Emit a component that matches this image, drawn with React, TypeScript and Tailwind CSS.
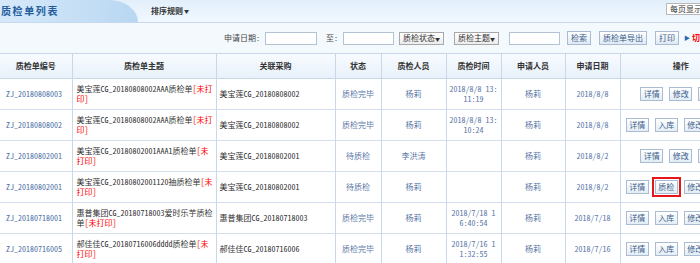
type Row = {
  code: string;
  title: string;
  first: string; // first line of title + [未打印]
  purchase: string;
  status: string;
  inspector: string;
  time: [string, string] | null;
  applicant: string;
  date: string;
  actions: string[];
  mark?: string;
};

const rows: Row[] = [
  {
    code: "ZJ_20180808003",
    title: "美宝莲CG_20180808002AAA质检单",
    first: "美宝莲CG_20180808002AAA质检单[未打",
    purchase: "美宝莲CG_20180808002",
    status: "质检完毕",
    inspector: "杨莉",
    time: ["2018/8/8 13:", "11:19"],
    applicant: "杨莉",
    date: "2018/8/8",
    actions: ["详情", "修改", "删除"],
  },
  {
    code: "ZJ_20180808002",
    title: "美宝莲CG_20180808002AAA质检单",
    first: "美宝莲CG_20180808002AAA质检单[未打",
    purchase: "美宝莲CG_20180808002",
    status: "质检完毕",
    inspector: "杨莉",
    time: ["2018/8/8 13:", "10:24"],
    applicant: "杨莉",
    date: "2018/8/8",
    actions: ["详情", "入库", "修改", "删除"],
  },
  {
    code: "ZJ_20180802001",
    title: "美宝莲CG_20180802001AAA1质检单",
    first: "美宝莲CG_20180802001AAA1质检单[未",
    purchase: "美宝莲CG_20180802001",
    status: "待质检",
    inspector: "李洪涛",
    time: null,
    applicant: "杨莉",
    date: "2018/8/2",
    actions: ["详情", "修改", "删除"],
  },
  {
    code: "ZJ_20180802001",
    title: "美宝莲CG_20180802001120抽质检单",
    first: "美宝莲CG_20180802001120抽质检单[未",
    purchase: "美宝莲CG_20180802001",
    status: "待质检",
    inspector: "杨莉",
    time: null,
    applicant: "杨莉",
    date: "2018/8/2",
    actions: ["详情", "质检", "修改", "删除"],
    mark: "质检",
  },
  {
    code: "ZJ_20180718001",
    title: "惠普集团CG_20180718003爱时乐芋质检单",
    first: "惠普集团CG_20180718003爱时乐芋质检",
    purchase: "惠普集团CG_20180718003",
    status: "质检完毕",
    inspector: "杨莉",
    time: ["2018/7/18 1", "6:40:54"],
    applicant: "杨莉",
    date: "2018/7/18",
    actions: ["详情", "入库", "修改", "删除"],
  },
  {
    code: "ZJ_20180716005",
    title: "郝佳佳CG_20180716006dddd质检单",
    first: "郝佳佳CG_20180716006dddd质检单[未",
    purchase: "郝佳佳CG_20180716006",
    status: "质检完毕",
    inspector: "杨莉",
    time: ["2018/7/16 1", "1:32:55"],
    applicant: "杨莉",
    date: "2018/7/16",
    actions: ["详情", "入库", "修改", "删除"],
  },
];

const headers = [
  "质检单编号",
  "质检单主题",
  "关联采购",
  "状态",
  "质检人员",
  "质检时间",
  "申请人员",
  "申请日期",
  "操作",
];

const widths = [72, 144, 119, 46, 65, 55, 64, 55, 121];

function Subject({ title, first }: { title: string; first: string }) {
  const full = title + "[未打印]";
  const lines = [first, full.slice(first.length)];
  let offset = 0;
  return (
    <>
      {lines.map((line, i) => {
        const start = offset;
        offset += line.length;
        const black = Math.max(0, Math.min(line.length, title.length - start));
        return (
          <div key={i} className="whitespace-nowrap">
            {line.slice(0, black)}
            <span className="text-[#ff0000]">{line.slice(black)}</span>
          </div>
        );
      })}
    </>
  );
}

function SmallButton({ label }: { label: string }) {
  return (
    <span className="flex h-[14px] w-[23px] items-center justify-center border border-[#a9bcd2] bg-gradient-to-b from-white to-[#e4edf6] text-[8px] leading-none text-[#3b5d8a]">
      {label}
    </span>
  );
}

function ToolButton({ label }: { label: string }) {
  return (
    <span className="flex h-[14px] items-center justify-center border border-[#a9bcd2] bg-gradient-to-b from-white to-[#dfe9f4] px-[3px] text-[8px] leading-none text-[#3b5d8a]">
      {label}
    </span>
  );
}

function TextInput({ width }: { width: string }) {
  return <span className={`block h-[13px] border border-[#b3c3d4] bg-white ${width}`} />;
}

function Select({ label }: { label: string }) {
  return (
    <span className="flex h-[13px] w-[45px] items-center justify-between border border-[#a8a8a8] bg-gradient-to-b from-white to-[#ececec] px-[3px] text-[8px] leading-none text-[#333]">
      <span>{label}</span>
      <span className="text-[5px]">▼</span>
    </span>
  );
}

export default function App() {
  return (
    <div className="h-[263px] w-[700px] overflow-hidden bg-white font-['Noto_Sans_Mono_CJK_SC','Noto_Sans_CJK_SC',sans-serif] text-[8px] leading-[10px] text-[#333]">
      {/* title bar */}
      <div className="flex h-[23px] items-stretch border-b border-[#c6d9ec] bg-gradient-to-b from-[#e2effb] to-[#f1f8fe]">
        <div className="flex w-[138px] items-center rounded-tr-[30px_23px] bg-gradient-to-r from-[#d6e9fa] to-[#b9d7f2] pl-[1px]">
          <span className="text-[10px] font-bold tracking-[1.6px] text-[#245d9c]">质检单列表</span>
        </div>
        <div className="ml-[13px] flex items-center gap-[1px] font-bold text-[#333]">
          <span>排序规则</span>
          <span className="text-[5px]">▼</span>
        </div>
        <div className="ml-auto mr-[-24px] mt-[3px] h-[12px] w-[58px] overflow-hidden border border-[#b8b8b8] bg-white px-[3px] text-[8px] leading-[10px] whitespace-nowrap">
          每页显示10条
        </div>
      </div>

      {/* toolbar */}
      <div className="flex h-[31px] items-center whitespace-nowrap border-b border-[#c8d8e9] bg-[#f4f9fe] pl-[224px] text-[#444]">
        <span>申请日期:</span>
        <span className="ml-[5px]"><TextInput width="w-[52px]" /></span>
        <span className="ml-[9px]">至:</span>
        <span className="ml-[5px]"><TextInput width="w-[51px]" /></span>
        <span className="ml-[5px]"><Select label="质检状态" /></span>
        <span className="ml-[10px]"><Select label="质检主题" /></span>
        <span className="ml-[10px]"><TextInput width="w-[51px]" /></span>
        <span className="ml-[7px]"><ToolButton label="检索" /></span>
        <span className="ml-[8px]"><ToolButton label="质检单导出" /></span>
        <span className="ml-[8px]"><ToolButton label="打印" /></span>
        <span className="ml-[5px] text-[6px] text-[#2a6ab0]">▶</span>
        <span className="ml-[2px] font-bold text-[#ff0000]">切换到列表</span>
      </div>

      {/* table */}
      <table className="w-[741px] table-fixed border-collapse">
        <colgroup>
          {widths.map((w, i) => (
            <col key={i} style={{ width: w }} />
          ))}
        </colgroup>
        <thead>
          <tr className="h-[24px] bg-gradient-to-b from-[#f8fbff] to-[#e8f1fa]">
            {headers.map((h, i) => (
              <th
                key={h}
                className={`border-b border-[#c8d8e9] text-center font-bold text-[#333] ${i > 0 ? "border-l" : ""}`}
              >
                {h}
              </th>
            ))}
          </tr>
        </thead>
        <tbody>
          {rows.map((r, idx) => (
            <tr key={idx} className="h-[31px] border-b border-[#d3dfec] bg-white">
              <td className="pl-[6px] text-[#4c6ea6] whitespace-nowrap">{r.code}</td>
              <td className="border-l border-[#c8d8e9] pl-[4px]">
                <Subject title={r.title} first={r.first} />
              </td>
              <td className="border-l border-[#c8d8e9] pl-[3px] whitespace-nowrap">{r.purchase}</td>
              <td className="border-l border-[#c8d8e9] text-center text-[#5a78a8] whitespace-nowrap">{r.status}</td>
              <td className="border-l border-[#c8d8e9] text-center text-[#5a78a8]">{r.inspector}</td>
              <td className="border-l border-[#c8d8e9] text-center text-[#5a78a8]">
                {r.time && (
                  <>
                    <div className="whitespace-nowrap">{r.time[0]}</div>
                    <div className="whitespace-nowrap">{r.time[1]}</div>
                  </>
                )}
              </td>
              <td className="border-l border-[#c8d8e9] text-center text-[#5a78a8]">{r.applicant}</td>
              <td className="border-l border-[#c8d8e9] text-center text-[#5a78a8]">{r.date}</td>
              <td className="border-l border-[#c8d8e9]">
                <div className="flex items-center justify-center gap-[6px]">
                  {r.actions.map((a) =>
                    a === r.mark ? (
                      <span key={a} className="-mx-[3px] border-2 border-[#e8151b] p-[1px]">
                        <SmallButton label={a} />
                      </span>
                    ) : (
                      <SmallButton key={a} label={a} />
                    )
                  )}
                </div>
              </td>
            </tr>
          ))}
        </tbody>
      </table>
    </div>
  );
}
